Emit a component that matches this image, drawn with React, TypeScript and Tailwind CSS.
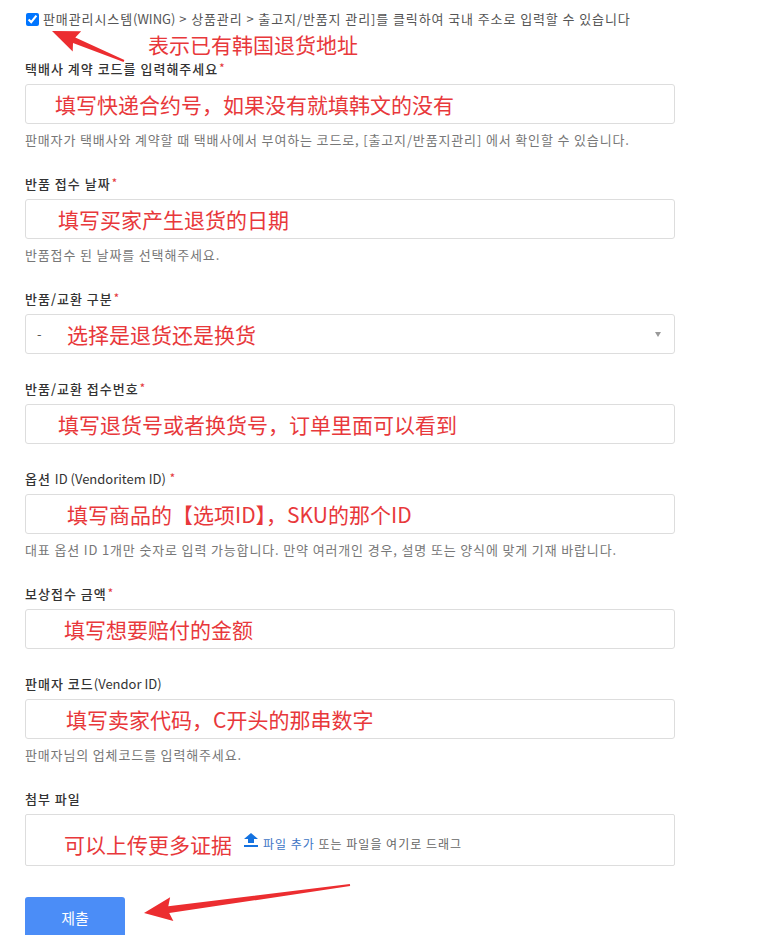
import type { ReactNode } from "react";

type Point = [number, number];

type FieldProps = {
  label: ReactNode;
  required?: boolean;
  help?: string;
  children: ReactNode;
};

function Field({ label, required, help, children }: FieldProps) {
  return (
    <div className="mb-[25px]">
      <div className="mb-[5px] h-5 text-[13px] font-medium leading-5 tracking-[1px] text-[#333]">
        {label}
        {required && <span className="ml-px align-top text-[11px] leading-4 text-[#e4393c]">*</span>}
      </div>
      {children}
      {help && <p className="mt-[7px] text-[13px] leading-[18px] tracking-[0.85px] text-[#777]">{help}</p>}
    </div>
  );
}

function Note({ children }: { children: ReactNode }) {
  return (
    <span className="font-['Noto_Sans_CJK_SC',sans-serif] text-[21px] leading-7 text-[#e8383b]">{children}</span>
  );
}

function TextBox({ note, indent }: { note: string; indent: string }) {
  return (
    <div className={`flex h-10 items-center rounded-[3px] border border-[#ddd] bg-white ${indent}`}>
      <Note>{note}</Note>
    </div>
  );
}

// red markup arrow drawn over the screenshot
function Arrow({ from, to, head, wing, neck = 3, tail = 1 }: { from: Point; to: Point; head: number; wing: number; neck?: number; tail?: number }) {
  const dx = to[0] - from[0];
  const dy = to[1] - from[1];
  const len = Math.hypot(dx, dy);
  const ux = dx / len;
  const uy = dy / len;
  const nx = -uy;
  const ny = ux;
  const bx = to[0] - ux * head;
  const by = to[1] - uy * head;
  const pts: Point[] = [
    [from[0] + nx * tail, from[1] + ny * tail],
    [bx + nx * neck, by + ny * neck],
    [bx + nx * wing - ux * 3, by + ny * wing - uy * 3],
    to,
    [bx - nx * wing - ux * 3, by - ny * wing - uy * 3],
    [bx - nx * neck, by - ny * neck],
    [from[0] - nx * tail, from[1] - ny * tail],
  ];
  return <polygon fill="#ec2d30" points={pts.map((p) => p.join(",")).join(" ")} />;
}

export default function App() {
  return (
    <div className="relative h-[935px] w-[776px] overflow-hidden bg-white pl-[25px] font-['Noto_Sans_CJK_KR','Noto_Sans_CJK_SC',sans-serif]">
      <div className="w-[650px]">
        <div className="mt-[10px] flex h-[18px] items-center gap-1 pl-px">
          <input className="m-0 h-[13px] w-[13px] accent-[#0075ff]" defaultChecked type="checkbox" />
          <span className="whitespace-nowrap text-[13px] leading-[18px] tracking-[0.9px] text-[#555]">
            판매관리시스템<span className="tracking-normal">(WING)</span> &gt; 상품관리 &gt; 출고지/반품지 관리]를 클릭하여 국내 주소로 입력할 수 있습니다
          </span>
        </div>
        <div className="h-[31px] pl-[123px] pt-[3px] leading-[26px]">
          <span className="font-['Noto_Sans_CJK_SC',sans-serif] text-[21px] leading-[26px] text-[#e8383b]">表示已有韩国退货地址</span>
        </div>

        <Field
          help="판매자가 택배사와 계약할 때 택배사에서 부여하는 코드로, [출고지/반품지관리] 에서 확인할 수 있습니다."
          label="택배사 계약 코드를 입력해주세요"
          required
        >
          <TextBox indent="pl-[29px]" note="填写快递合约号，如果没有就填韩文的没有" />
        </Field>

        <Field help="반품접수 된 날짜를 선택해주세요." label="반품 접수 날짜" required>
          <TextBox indent="pl-[32px]" note="填写买家产生退货的日期" />
        </Field>

        <Field label="반품/교환 구분" required>
          <div className="flex h-10 items-center rounded-[3px] border border-[#ddd] pl-[11px] pr-[13px]">
            <span className="w-[30px] text-[13px] text-[#555]">-</span>
            <Note>选择是退货还是换货</Note>
            <span className="ml-auto h-0 w-0 border-x-[3px] border-t-[5px] border-x-transparent border-t-[#999]" />
          </div>
        </Field>

        <Field label="반품/교환 접수번호" required>
          <TextBox indent="pl-[32px]" note="填写退货号或者换货号，订单里面可以看到" />
        </Field>

        <Field
          help="대표 옵션 ID 1개만 숫자로 입력 가능합니다. 만약 여러개인 경우, 설명 또는 양식에 맞게 기재 바랍니다."
          label={
            <>
              옵션 <span className="font-normal tracking-normal">ID (Vendoritem ID) </span>
            </>
          }
          required
        >
          <TextBox indent="pl-[41px]" note="填写商品的【选项ID】，SKU的那个ID" />
        </Field>

        <Field label="보상접수 금액" required>
          <TextBox indent="pl-[38px]" note="填写想要赔付的金额" />
        </Field>

        <Field
          help="판매자님의 업체코드를 입력해주세요."
          label={
            <>
              판매자 코드<span className="font-normal tracking-normal">(Vendor ID)</span>
            </>
          }
        >
          <TextBox indent="pl-[40px]" note="填写卖家代码，C开头的那串数字" />
        </Field>

        <div>
          <div className="mb-[5px] h-5 text-[13px] font-medium leading-5 tracking-[1px] text-[#333]">첨부 파일</div>
          <div className="flex h-[52px] items-center rounded-[2px] border border-[#ddd] pl-[38px] pt-2">
            <Note>可以上传更多证据</Note>
            <svg className="mb-2 ml-3 h-[14px] w-[14px]" viewBox="0 0 14 14">
              <path d="M7 0 14 6H10V10H4V6H0Z" fill="#1472e0" />
              <rect fill="#1472e0" height="2" width="14" x="0" y="12" />
            </svg>
            <span className="ml-[5px] text-[12px] leading-7 tracking-[1px] text-[#666]">
              <span className="text-[#3d74c4]">파일 추가</span> 또는 파일을 여기로 드래그
            </span>
          </div>
        </div>

        <button className="mt-[31px] flex h-[42px] w-[100px] items-center justify-center rounded-[3px] bg-[#4b8df7] text-[15px] text-white">
          제출
        </button>
      </div>

      <svg className="pointer-events-none absolute left-0 top-0" height="935" width="776">
        <Arrow from={[124, 61]} head={24} to={[52, 31]} wing={11} />
        <Arrow from={[350, 885]} head={25} neck={3.5} to={[144, 913]} wing={12} />
      </svg>
    </div>
  );
}
